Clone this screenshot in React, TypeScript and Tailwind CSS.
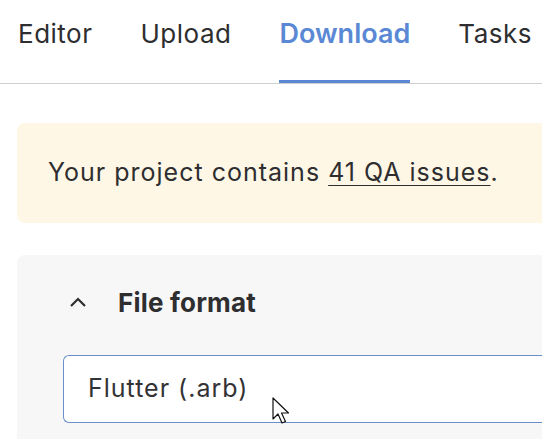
import React from "react";

const font = { fontFamily: "Inter, 'Noto Sans', sans-serif" };

function Tab({ label, active }: { label: string; active?: boolean }) {
  return (
    <div
      className={
        "h-[83px] pt-[16px] leading-[36px] " +
        (active
          ? "border-b-[3px] border-[#5b88d4] text-[#5b88d4] font-semibold text-[27px]"
          : "text-[#2e2e30] text-[26px] tracking-[0.5px]")
      }
    >
      {label}
    </div>
  );
}

export default function App() {
  return (
    <div className="w-[542px] h-[439px] overflow-hidden bg-white relative" style={font}>
      <div className="w-[600px]">
        <div className="flex gap-[48px] pl-[18px] border-b border-[#cfcfcf]">
          <Tab label="Editor" />
          <Tab label="Upload" />
          <Tab label="Download" active />
          <Tab label="Tasks" />
        </div>

        <div className="ml-[17px] mt-[39px] h-[100px] rounded-l-lg bg-[#fff7e6] flex items-center pl-[31px] text-[25px] tracking-[1px] text-[#2e2e30]">
          <span>
            Your project contains{" "}
            <span className="underline underline-offset-[4px] decoration-1">41 QA issues</span>.
          </span>
        </div>

        <div className="ml-[17px] mt-[32px] h-[200px] rounded-tl-lg bg-[#f7f7f7] pt-[29px] pl-[46px]">
          <div className="flex items-center h-[36px]">
            <svg width="18" height="12" viewBox="0 0 18 12" className="ml-[6px]">
              <path d="M2 10 L9 3 L16 10" fill="none" stroke="#2e2e30" strokeWidth="2.2" />
            </svg>
            <span className="ml-[31px] text-[26px] font-bold text-[#2e2e30] tracking-[0.2px]">File format</span>
          </div>
          <div className="mt-[35px] h-[68px] rounded-l-md border border-r-0 border-[#6a8fc8] bg-white flex items-center pl-[24px] text-[25px] tracking-[1px] text-[#333335]">
            Flutter (.arb)
          </div>
        </div>
      </div>

      <svg
        className="absolute left-[272px] top-[397px]"
        width="20"
        height="30"
        viewBox="0 0 20 30"
      >
        <path
          d="M1 1 L1 22 L6 17 L10 26 L13.5 24.5 L9.5 16 L16.5 16 Z"
          fill="white"
          stroke="#111"
          strokeWidth="1.2"
          strokeLinejoin="round"
        />
      </svg>
    </div>
  );
}
